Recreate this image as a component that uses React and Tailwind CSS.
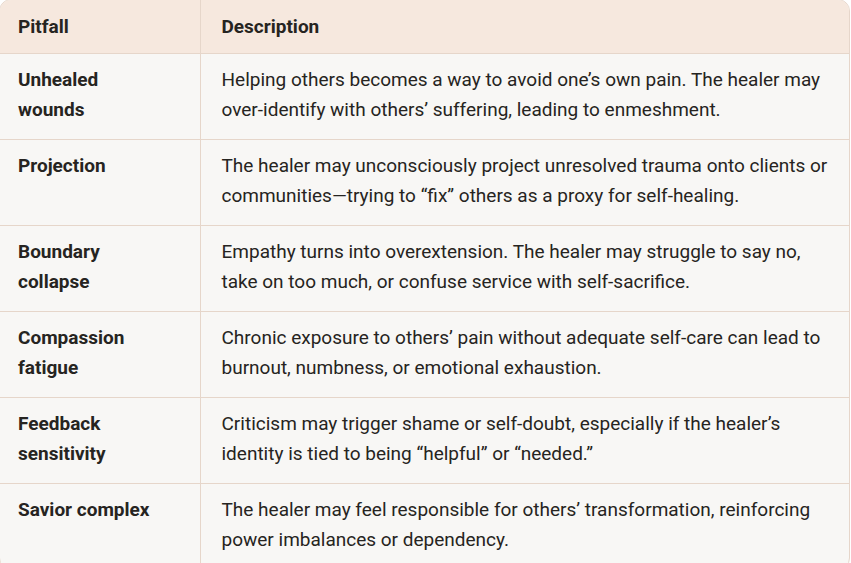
export default function App() {
  const rows = [
    ["Unhealed wounds", "Helping others becomes a way to avoid one\u2019s own pain. The healer may over-identify with others\u2019 suffering, leading to enmeshment."],
    ["Projection", "The healer may unconsciously project unresolved trauma onto clients or communities\u2014trying to \u201cfix\u201d others as a proxy for self-healing."],
    ["Boundary collapse", "Empathy turns into overextension. The healer may struggle to say no, take on too much, or confuse service with self-sacrifice."],
    ["Compassion fatigue", "Chronic exposure to others\u2019 pain without adequate self-care can lead to burnout, numbness, or emotional exhaustion."],
    ["Feedback sensitivity", "Criticism may trigger shame or self-doubt, especially if the healer\u2019s identity is tied to being \u201chelpful\u201d or \u201cneeded.\u201d"],
    ["Savior complex", "The healer may feel responsible for others\u2019 transformation, reinforcing power imbalances or dependency."],
  ];

  return (
    <div className="min-h-screen bg-white overflow-hidden">
      <div className="-mt-px -ml-px w-[851px] rounded-xl border border-[#e6d6ca] overflow-hidden bg-[#f8f7f5] font-['Roboto','Noto_Sans',sans-serif] text-[19px] leading-[30px] text-[#262421]">
        <table className="w-full border-collapse">
          <thead>
            <tr className="bg-[#f6e8de]">
              <th className="w-[200px] pl-[18px] pr-[36px] pt-3 pb-[11px] text-left font-bold border-r border-[#e6d6ca]">Pitfall</th>
              <th className="pl-[21px] pr-4 pt-3 pb-[11px] text-left font-bold">Description</th>
            </tr>
          </thead>
          <tbody>
            {rows.map(([pitfall, desc]) => (
              <tr key={pitfall} className="border-t border-[#e6d6ca]">
                <td className="w-[200px] pl-[18px] pr-[36px] pt-[11px] pb-[14px] align-top font-bold border-r border-[#e6d6ca]">{pitfall}</td>
                <td className="pl-[21px] pr-4 pt-[11px] pb-[14px] align-top">{desc}</td>
              </tr>
            ))}
          </tbody>
        </table>
      </div>
    </div>
  );
}
